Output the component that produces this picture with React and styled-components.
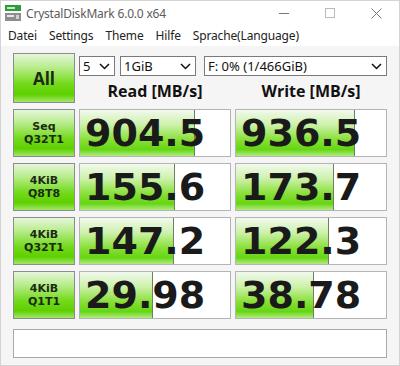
import React from 'react';
import styled, { createGlobalStyle } from 'styled-components';

const GlobalStyle = createGlobalStyle`
  html, body {
    margin: 0;
    padding: 0;
    background: #ffffff;
  }
  * {
    box-sizing: border-box;
  }
`;

const bars = [
  { label: ['Seq', 'Q32T1'], read: '904.5', readW: 115, write: '936.5', writeW: 119 },
  { label: ['4KiB', 'Q8T8'], read: '155.6', readW: 95, write: '173.7', writeW: 98 },
  { label: ['4KiB', 'Q32T1'], read: '147.2', readW: 94, write: '122.3', writeW: 93 },
  { label: ['4KiB', 'Q1T1'], read: '29.98', readW: 73, write: '38.78', writeW: 78 },
];

const Window = styled.div`
  width: 400px;
  height: 366px;
  display: flex;
  flex-direction: column;
  background: #f5f5f5;
  border: 1px solid #d4d4d4;
  font-family: 'Noto Sans', 'Open Sans', sans-serif;
  overflow: hidden;
`;

const TitleBar = styled.div`
  height: 24px;
  display: flex;
  align-items: center;
  background: #ffffff;
  padding-left: 4px;
`;

const TitleText = styled.span`
  margin-left: 5px;
  font-size: 12px;
  color: #5c5c5c;
  letter-spacing: -0.2px;
  flex: 1;
`;

const Controls = styled.div`
  display: flex;
  align-items: center;
  height: 100%;
`;

const ControlBtn = styled.div`
  width: 46px;
  height: 100%;
  display: flex;
  align-items: center;
  justify-content: center;
`;

const MenuBar = styled.div`
  height: 21px;
  display: flex;
  align-items: center;
  background: #ffffff;
  padding-left: 1px;
`;

const MenuItem = styled.span`
  font-size: 12px;
  color: #222;
  padding: 0 6px;
  letter-spacing: -0.15px;
`;

const Body = styled.div`
  flex: 1;
  padding: 7px 0 0 12px;
  display: flex;
  flex-direction: column;
`;

const Grid = styled.div`
  display: grid;
  grid-template-columns: 62px 152px 152px;
  column-gap: 4px;
  row-gap: 6px;
`;

const TopRight = styled.div`
  grid-column: 2 / 4;
  display: grid;
  grid-template-columns: 152px 152px;
  grid-template-rows: 22px 28px;
  column-gap: 4px;
`;

const Selects = styled.div`
  grid-column: 1 / 3;
  display: flex;
  gap: 5px;
  padding-top: 3px;
`;

const Select = styled.div`
  width: ${({ w }) => w}px;
  margin-right: ${({ mr }) => mr || 0}px;
  height: 20px;
  background: #ffffff;
  border: 1px solid #7a7a7a;
  display: flex;
  align-items: center;
  justify-content: space-between;
  padding: 0 4px 0 3px;
  font-size: 13px;
  color: #111;
`;

const Header = styled.div`
  display: flex;
  align-items: center;
  justify-content: center;
  font-family: 'Open Sans', 'Noto Sans', sans-serif;
  font-weight: 700;
  font-size: 16px;
  color: #111;
  padding-top: 4px;
`;

const GreenButton = styled.div`
  height: ${({ h }) => h}px;
  border: 1px solid #8c8c8c;
  background: linear-gradient(
    to bottom,
    #e6f6dc 0%,
    #b8ec8c 28%,
    #74da1c 62%,
    #5ed000 84%,
    #a2e668 100%
  );
  display: flex;
  flex-direction: column;
  align-items: center;
  justify-content: center;
  color: #1c2a14;
  font-family: ${({ fs }) => (fs > 14 ? "'Open Sans', 'Noto Sans'" : "'DejaVu Sans'")}, sans-serif;
  font-weight: 700;
  font-size: ${({ fs }) => fs}px;
`;

const LabelLine = styled.span`
  display: block;
  line-height: 13px;
`;

const ValueCell = styled.div`
  position: relative;
  height: 48px;
  background: #ffffff;
  border: 1px solid #b4b4b4;
  overflow: hidden;
`;

const Bar = styled.div`
  height: 100%;
  background: linear-gradient(
    to bottom,
    #f2f9ee 0%,
    #cdf1ab 32%,
    #86df33 66%,
    #66d514 86%,
    #b2ec80 100%
  );
  border-right: 1px solid #6e7f63;
`;

const Value = styled.div`
  position: absolute;
  inset: 0;
  display: flex;
  align-items: center;
  padding-left: 5px;
  font-family: 'DejaVu Sans', sans-serif;
  font-weight: 700;
  font-size: 38px;
  color: #1a1a1a;
`;

const StatusBar = styled.div`
  margin-top: 10px;
  width: 374px;
  height: 29px;
  background: #ffffff;
  border: 1px solid #a8a8a8;
`;

const Chevron = () => (
  <svg width="11" height="7" viewBox="0 0 11 7">
    <path d="M1 1 L5.5 5.5 L10 1" stroke="#111" strokeWidth="1.5" fill="none" />
  </svg>
);

const AppIcon = () => (
  <svg width="16" height="18" viewBox="0 0 16 18">
    <rect x="0" y="1" width="16" height="6" fill="#2e9a3c" />
    <rect x="2" y="3" width="8" height="2" fill="#b8f0b8" />
    <rect x="0" y="9" width="16" height="8" fill="#8e8e8e" />
    <rect x="2" y="11" width="7" height="2" fill="#e8e8e8" />
    <rect x="11" y="11" width="3" height="4" fill="#cfcfcf" />
  </svg>
);

const App = () => (
  <>
    <GlobalStyle />
    <Window>
      <TitleBar>
        <AppIcon />
        <TitleText>CrystalDiskMark 6.0.0 x64</TitleText>
        <Controls>
          <ControlBtn>
            <svg width="10" height="10" viewBox="0 0 10 10">
              <line x1="0" y1="5.5" x2="10" y2="5.5" stroke="#777" strokeWidth="1" />
            </svg>
          </ControlBtn>
          <ControlBtn>
            <svg width="10" height="10" viewBox="0 0 10 10">
              <rect x="0.5" y="0.5" width="9" height="9" stroke="#bbb" fill="none" />
            </svg>
          </ControlBtn>
          <ControlBtn>
            <svg width="11" height="11" viewBox="0 0 11 11">
              <path d="M0.5 0.5 L10.5 10.5 M10.5 0.5 L0.5 10.5" stroke="#777" strokeWidth="1" />
            </svg>
          </ControlBtn>
        </Controls>
      </TitleBar>
      <MenuBar>
        <MenuItem>Datei</MenuItem>
        <MenuItem>Settings</MenuItem>
        <MenuItem>Theme</MenuItem>
        <MenuItem>Hilfe</MenuItem>
        <MenuItem>Sprache(Language)</MenuItem>
      </MenuBar>
      <Body>
        <Grid>
          <GreenButton h={50} fs={17}>All</GreenButton>
          <TopRight>
            <Selects>
              <Select w={36}>
                5 <Chevron />
              </Select>
              <Select w={76} mr={3}>
                1GiB <Chevron />
              </Select>
              <Select w={183}>
                F: 0% (1/466GiB) <Chevron />
              </Select>
            </Selects>
            <Header>Read [MB/s]</Header>
            <Header>Write [MB/s]</Header>
          </TopRight>
          {bars.map((b) => (
            <React.Fragment key={b.label.join()}>
              <GreenButton h={48} fs={11}>
                <LabelLine>{b.label[0]}</LabelLine>
                <LabelLine>{b.label[1]}</LabelLine>
              </GreenButton>
              <ValueCell>
                <Bar style={{ width: b.readW }} />
                <Value>{b.read}</Value>
              </ValueCell>
              <ValueCell>
                <Bar style={{ width: b.writeW }} />
                <Value>{b.write}</Value>
              </ValueCell>
            </React.Fragment>
          ))}
        </Grid>
        <StatusBar />
      </Body>
    </Window>
  </>
);

export default App;
